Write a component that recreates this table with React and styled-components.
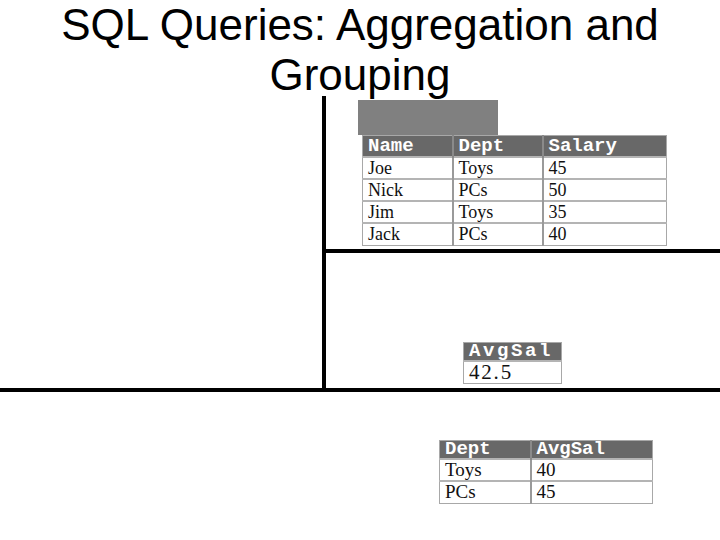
import styled, { createGlobalStyle } from "styled-components";

const GlobalStyle = createGlobalStyle`
  html, body {
    margin: 0;
    padding: 0;
    background: #fff;
  }
  body {
    width: 720px;
    height: 540px;
    overflow: hidden;
  }
`;

const employees = [
  { name: "Joe", dept: "Toys", salary: 45 },
  { name: "Nick", dept: "PCs", salary: 50 },
  { name: "Jim", dept: "Toys", salary: 35 },
  { name: "Jack", dept: "PCs", salary: 40 },
];

const byDept = [
  { dept: "Toys", avg: 40 },
  { dept: "PCs", avg: 45 },
];

function Cols({ widths }) {
  return (
    <colgroup>
      {widths.map((w, i) => (
        <col key={i} style={{ width: w }} />
      ))}
    </colgroup>
  );
}

function App() {
  return (
    <>
      <GlobalStyle />
      <Slide>
        <Title>
          SQL Queries: Aggregation and
          <br />
          Grouping
        </Title>
        <Board>
          <VLine />
          <TopCell>
            <Shade />
            <Table $width={304} $indent={4}>
              <Cols widths={[90, 90, 124]} />
              <thead>
                <tr>
                  <Th $h={21}>Name</Th>
                  <Th $h={21}>Dept</Th>
                  <Th $h={21}>Salary</Th>
                </tr>
              </thead>
              <tbody>
                {employees.map((e) => (
                  <tr key={e.name}>
                    <Td $h={22}>{e.name}</Td>
                    <Td $h={22}>{e.dept}</Td>
                    <Td $h={22}>{e.salary}</Td>
                  </tr>
                ))}
              </tbody>
            </Table>
          </TopCell>
          <HLine />
          <MidCell>
            <Table $width={98}>
              <Cols widths={[98]} />
              <thead>
                <tr>
                  <Th $h={18} $wide>
                    AvgSal
                  </Th>
                </tr>
              </thead>
              <tbody>
                <tr>
                  <Td $h={23} $wide>
                    42.5
                  </Td>
                </tr>
              </tbody>
            </Table>
          </MidCell>
          <FullLine />
          <BottomCell>
            <Table $width={213}>
              <Cols widths={[91, 122]} />
              <thead>
                <tr>
                  <Th $h={18}>Dept</Th>
                  <Th $h={18}>AvgSal</Th>
                </tr>
              </thead>
              <tbody>
                {byDept.map((d) => (
                  <tr key={d.dept}>
                    <Td $h={22} $big>
                      {d.dept}
                    </Td>
                    <Td $h={22} $big>
                      {d.avg}
                    </Td>
                  </tr>
                ))}
              </tbody>
            </Table>
          </BottomCell>
        </Board>
      </Slide>
    </>
  );
}

const Slide = styled.div`
  width: 720px;
  height: 540px;
  background: #fff;
  overflow: hidden;
`;

const Title = styled.h1`
  margin: 0;
  height: 96px;
  font-family: "Liberation Sans", Arial, sans-serif;
  font-weight: 400;
  font-size: 44px;
  line-height: 50px;
  text-align: center;
  color: #000;
`;

const Board = styled.div`
  display: grid;
  grid-template-columns: 322px 4px 1fr;
  grid-template-rows: 153px 4px 135px 4px 1fr;
  height: 444px;
`;

const VLine = styled.div`
  grid-column: 2;
  grid-row: 1 / 4;
  background: #000;
`;

const HLine = styled.div`
  grid-column: 3;
  grid-row: 2;
  background: #000;
`;

const FullLine = styled.div`
  grid-column: 1 / 4;
  grid-row: 4;
  background: #000;
`;

const TopCell = styled.div`
  grid-column: 3;
  grid-row: 1;
  display: flex;
  flex-direction: column;
  align-items: flex-start;
  padding: 4px 0 0 32px;
`;

const Shade = styled.div`
  width: 140px;
  height: 35px;
  background: #808080;
`;

const MidCell = styled.div`
  grid-column: 3;
  grid-row: 3;
  display: flex;
  flex-direction: column;
  justify-content: flex-end;
  padding: 0 0 4px 137px;
`;

const BottomCell = styled.div`
  grid-column: 1 / 4;
  grid-row: 5;
  padding: 48px 0 0 439px;
`;

const Table = styled.table`
  border-collapse: collapse;
  table-layout: fixed;
  margin-left: ${(p) => p.$indent || 0}px;
  width: ${(p) => p.$width}px;
  border: 1px solid #a8a8a8;
`;

const Th = styled.th`
  box-sizing: border-box;
  background: #686868;
  color: #fff;
  text-align: left;
  vertical-align: middle;
  font-family: "Liberation Mono", "Courier New", monospace;
  font-weight: 700;
  font-size: 19px;
  letter-spacing: ${(p) => (p.$wide ? "2.6px" : "0")};
  height: ${(p) => p.$h}px;
  line-height: ${(p) => p.$h - 1}px;
  padding: 0 0 0 5px;
  border-left: 2px solid #8a8a8a;
  white-space: nowrap;
  &:first-child {
    border-left: none;
  }
`;

const Td = styled.td`
  box-sizing: border-box;
  font-family: "Liberation Serif", "Times New Roman", serif;
  font-size: ${(p) => (p.$wide ? "21px" : p.$big ? "19px" : "18px")};
  letter-spacing: ${(p) => (p.$wide ? "1.8px" : "0")};
  color: #111;
  height: ${(p) => p.$h}px;
  line-height: ${(p) => p.$h - 2}px;
  padding: 0 0 0 5px;
  border-top: 2px solid #b4b4b4;
  border-left: 2px solid #9a9a9a;
  white-space: nowrap;
  &:first-child {
    border-left: none;
  }
`;

export default App;
